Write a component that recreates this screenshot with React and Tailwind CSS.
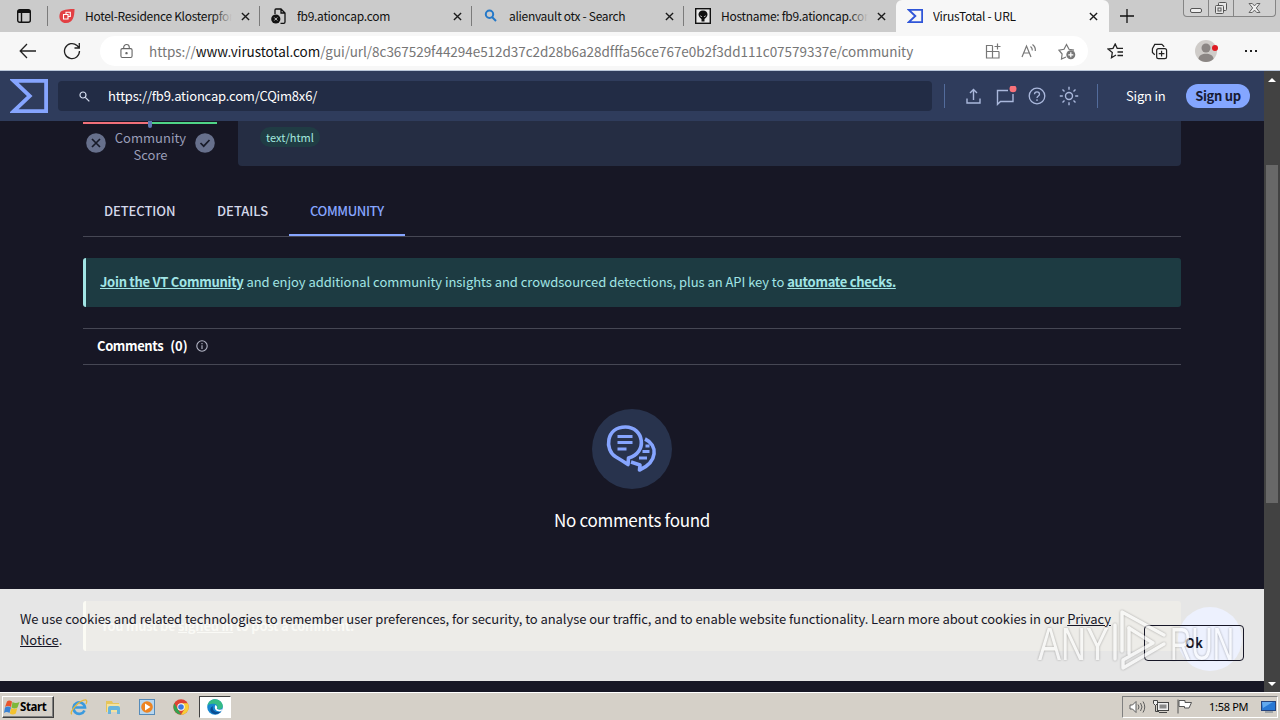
import React from 'react';

const Sigma = ({ className, strokeWidth = 9 }) => (
  <svg viewBox="0 0 100 89" preserveAspectRatio="none" className={className} fill="none" stroke="currentColor" strokeWidth={strokeWidth}>
    <path d="M10 5H95V84H10L52 44.500Z" />
  </svg>
);

const CloseIcon = () => (
  <svg viewBox="0 0 10 10" className="h-[9px] w-[9px] shrink-0" stroke="#1b1b1b" strokeWidth="1.500">
    <path d="M1 1l8 8M9 1l-8 8" />
  </svg>
);

const FireIcon = () => (
  <svg viewBox="0 0 16 16" className="h-4 w-4 shrink-0">
    <path d="M2 3.500C5 1.500 11 1 15.500 1c0 7-1.500 14-8.500 14C0 15-1 7.500 2 3.500z" fill="#e23f43" />
    <path d="M4.500 6.500h4.500v4.500H4.500zM7 6V4.300h4.300v4.200H9.500" fill="none" stroke="#fff" strokeWidth="1.100" />
  </svg>
);

const BrokenFileIcon = () => (
  <svg viewBox="0 0 16 16" className="h-4 w-4 shrink-0" fill="none" stroke="#111" strokeWidth="1.300">
    <path d="M4 6V2q0-1 1-1h5l4 4v9q0 1.300-1.300 1.300H9.500M10 1v4h4" />
    <circle cx="4.800" cy="11" r="4.600" fill="#111" stroke="none" />
    <path d="M3.300 9.500l3 3m0-3l-3 3" stroke="#ccc" strokeWidth="1" />
  </svg>
);

const BlueSearchIcon = () => (
  <svg viewBox="0 0 16 16" className="h-4 w-4 shrink-0" fill="none" stroke="#2478c8" strokeWidth="2">
    <circle cx="6.500" cy="6.300" r="3.700" />
    <path d="M9 9l4 4" />
  </svg>
);

const AlienIcon = () => (
  <svg viewBox="0 0 16 16" className="h-4 w-4 shrink-0">
    <rect x="0.700" y="0.700" width="14.600" height="14.600" fill="#e8e8e8" stroke="#111" strokeWidth="1.400" />
    <path d="M8 2.500c3 0 4.500 1.800 4.500 4 0 2.500-2 3.500-3 4.500v2.500h-3V11C5.500 10 3.500 9 3.500 6.500c0-2.200 1.500-4 4.500-4z" fill="#111" />
    <path d="M5 7l2.300 2H6zM11 7L8.700 9H10z" fill="#eee" />
  </svg>
);

const tabs = [
  { title: 'Hotel-Residence Klosterpforte', icon: <FireIcon />, fade: true },
  { title: 'fb9.ationcap.com', icon: <BrokenFileIcon /> },
  { title: 'alienvault otx - Search', icon: <BlueSearchIcon /> },
  { title: 'Hostname: fb9.ationcap.com', icon: <AlienIcon />, fade: true },
  { title: 'VirusTotal - URL', icon: <Sigma className="h-[14px] w-4 shrink-0 text-[#2f55d8]" strokeWidth={12} />, active: true },
];

const Tab = ({ tab }) => (
  <div className={tab.active
    ? 'flex w-[213px] items-center rounded-t-md bg-[#f7f7f7] pl-[11px] pr-[11px]'
    : 'flex w-[212px] items-center pl-[11px] pr-[10px]'}
  >
    {tab.icon}
    <div className="relative ml-[10px] mr-[9px] flex-1 overflow-hidden whitespace-nowrap text-[12px] leading-4 tracking-[-0.300px] text-[#111]">
      {tab.title}
      {tab.fade && <span className="absolute inset-y-0 right-0 w-5 bg-linear-to-r from-transparent to-[#cbcbcb]" />}
    </div>
    <CloseIcon />
  </div>
);

const TabStrip = () => (
  <div className="flex h-8 shrink-0 bg-[#cbcbcb]">
    <div className="flex w-12 items-center justify-center">
      <svg viewBox="0 0 16 16" className="h-4 w-4" fill="none" stroke="#111" strokeWidth="1.400">
        <rect x="1.700" y="1.700" width="12.600" height="12.600" rx="2" />
        <path d="M2 3.500h12" strokeWidth="3" />
        <path d="M5.500 4v10" />
      </svg>
    </div>
    {tabs.map((tab, i) => (
      <React.Fragment key={tab.title}>
        {i < 4 && <div className="-ml-px mt-[6px] h-5 w-px bg-[#7b7b7b]" />}
        <Tab tab={tab} />
      </React.Fragment>
    ))}
    <svg viewBox="0 0 14 14" className="ml-[11px] mt-[9px] h-[14px] w-[14px]" stroke="#111" strokeWidth="1.300">
      <path d="M7 0v14M0 7h14" />
    </svg>
    <div className="ml-auto mr-[4px] flex h-[17px] w-[93px] rounded-b-[4px] border border-t-0 border-[#858585] bg-[#d0d0d0]">
      <div className="flex w-[25px] justify-center border-r border-[#858585] pt-[8px]">
        <span className="h-[5px] w-3 rounded-[2px] border border-[#555] bg-[#eee]" />
      </div>
      <div className="flex w-[25px] justify-center border-r border-[#858585] pt-[2px]">
        <svg viewBox="0 0 14 13" className="h-[13px] w-[14px]" fill="#e6e6e6" stroke="#555">
          <rect x="4.500" y="0.500" width="8" height="8" rx="1" />
          <rect x="1.500" y="3.500" width="8" height="8" rx="1" />
          <rect x="4" y="6" width="3" height="3" />
        </svg>
      </div>
      <div className="flex flex-1 justify-center pt-[3px]">
        <svg viewBox="0 0 14 11" className="h-[10px] w-[13px]">
          <path d="M1 .5h3.500L7 3.200 9.500.5H13L9 5.500l4 5H9.500L7 7.800l-2.500 2.700H1l4-5z" fill="#eee" stroke="#555" />
        </svg>
      </div>
    </div>
  </div>
);

const Toolbar = () => (
  <div className="flex h-[39px] shrink-0 items-center border-b border-[#b9c6da] bg-[#f7f7f7]">
    <svg viewBox="0 0 18 16" className="ml-[19px] h-4 w-[18px]" fill="none" stroke="#222" strokeWidth="1.300">
      <path d="M17 8H1.500M8 1L1.200 8 8 15" />
    </svg>
    <svg viewBox="0 0 18 18" className="ml-[26px] h-[18px] w-[18px]" fill="none" stroke="#222" strokeWidth="1.300">
      <path d="M16.500 9A7.500 7.500 0 1 1 14 3.500l2 2M16.300 1v5H11.500" />
    </svg>
    <div className="ml-[19px] flex h-[30px] w-[988px] items-center rounded-full bg-white pl-[20px]">
      <svg viewBox="0 0 14 16" className="h-4 w-[13px] shrink-0" fill="none" stroke="#666" strokeWidth="1.200">
        <rect x="1" y="5.500" width="12" height="9.500" rx="1.500" />
        <path d="M4 5.500V4a3 3 0 0 1 6 0v1.500" />
        <circle cx="7" cy="10.300" r="0.700" fill="#666" />
      </svg>
      <div className="ml-4 w-[800px] whitespace-nowrap text-[13.500px] tracking-[-0.040px] text-[#767676]">
        https://<span className="text-[#111]">www.virustotal.com</span>/gui/url/8c367529f44294e512d37c2d28b6a28dfffa56ce767e0b2f3dd111c07579337e/community
      </div>
      <div className="ml-auto mr-[12px] flex items-center gap-[20px] text-[#777]">
        <svg viewBox="0 0 16 16" className="h-4 w-4" fill="none" stroke="currentColor" strokeWidth="1.200">
          <path d="M7.500 2.500H1.500v12.500h12.500V8.500M1.500 8.500h12.500M7.500 2.500v12.500M12.500.5v6M9.500 3.500h6" />
        </svg>
        <svg viewBox="0 0 17 16" className="h-4 w-[17px]" fill="none" stroke="currentColor" strokeWidth="1.200">
          <path d="M1 14L5.500 3 10 14M2.700 10h5.800M9.500 3.500q2 1.500 1.800 4M11.500 1.500q3.300 2.500 2.800 6.500" />
        </svg>
        <svg viewBox="0 0 18 17" className="h-[17px] w-[18px]" fill="none" stroke="currentColor" strokeWidth="1.200">
          <path d="M8 14l-4.500 2 .6-5L1 7.200l5-.9L8.500 1.500 11 6.300l5 .9" />
          <circle cx="12.800" cy="11.800" r="4.500" fill="currentColor" stroke="none" />
          <path d="M12.800 9.300v5M10.300 11.800h5" stroke="#fff" />
        </svg>
      </div>
    </div>
    <svg viewBox="0 0 18 16" className="ml-[19px] h-4 w-[18px]" fill="none" stroke="#222" strokeWidth="1.300">
      <path d="M9 12l-4.500 2.700.8-5.200L1 6l5-.7L8.200 1l2 4.300H16M10.500 9H16M10.500 12.500H16" />
    </svg>
    <svg viewBox="0 0 18 18" className="ml-[26px] h-[17px] w-[17px]" fill="none" stroke="#222" strokeWidth="1.300">
      <path d="M4 12.500L1.500 10V6L4 1.500h7.500L14 4" />
      <rect x="6" y="6" width="10.500" height="10.500" rx="2" />
      <path d="M11.200 8.200v6M8.200 11.200h6" />
    </svg>
    <svg viewBox="0 0 24 22" className="ml-[27px] h-[22px] w-6">
      <circle cx="11" cy="11" r="11" fill="#cfccc9" />
      <circle cx="11" cy="8" r="4.500" fill="#8b8684" />
      <path d="M3.500 19c0-7 15-7 15 0-4 4-11 4-15 0z" fill="#8b8684" />
      <circle cx="20" cy="8" r="3" fill="#df1b23" />
    </svg>
    <div className="ml-[26px] flex gap-[3px]">
      <span className="h-[2px] w-[2px] bg-[#222]" />
      <span className="h-[2px] w-[2px] bg-[#222]" />
      <span className="h-[2px] w-[2px] bg-[#222]" />
    </div>
  </div>
);

const Header = () => (
  <header className="flex h-[50px] items-center bg-[#2f3c5c]">
    <Sigma className="ml-[10px] h-[34px] w-[38px] text-[#86a5ff]" strokeWidth={10} />
    <div className="ml-[10px] flex h-[30px] w-[874px] items-center rounded-[4px] bg-[#222c45] pl-[21px]">
      <svg viewBox="0 0 11 11" className="h-[11px] w-[11px]" fill="none" stroke="#d6def0" strokeWidth="1.200">
        <circle cx="4" cy="4" r="3" />
        <path d="M6.300 6.300l4 4" />
      </svg>
      <span className="ml-[18px] text-[13px] tracking-[-0.190px] text-white">https://fb9.ationcap.com/CQim8x6/</span>
    </div>
    <div className="ml-[12px] h-6 w-px bg-[#536c9c]" />
    <div className="ml-[20px] flex items-center gap-[13px] text-[#aab8dc]">
      <svg viewBox="0 0 17 16" className="h-4 w-[17px]" fill="none" stroke="currentColor" strokeWidth="1.400">
        <path d="M2 10.500V15h13v-4.500M8.500 12V2M5 5l3.500-3.500L12 5" />
      </svg>
      <svg viewBox="0 0 22 20" className="-mt-px h-5 w-[22px]" fill="none" stroke="currentColor" strokeWidth="1.400">
        <path d="M13 4.500H2.500v13.800L5.500 15.500h12.500V8" />
        <circle cx="18" cy="2.800" r="3.500" fill="#f8727a" stroke="none" />
      </svg>
      <svg viewBox="0 0 18 18" className="-ml-[2px] h-[18px] w-[18px]" fill="none" stroke="currentColor" strokeWidth="1.300">
        <circle cx="9" cy="9" r="7.800" />
        <path d="M6.500 7.200C6.500 4 11.500 4 11.500 7.200c0 1.800-2.500 1.700-2.500 3.800M9 12.300v1.700" />
      </svg>
      <svg viewBox="0 0 20 20" className="h-5 w-5" fill="none" stroke="currentColor" strokeWidth="1.400">
        <circle cx="10" cy="10" r="3.500" />
        <path d="M10 .8v3M10 16.200v3M.8 10h3M16.200 10h3M3.500 3.500l2 2M14.500 14.500l2 2M3.500 16.500l2-2M14.500 5.500l2-2" />
      </svg>
    </div>
    <div className="ml-[18px] h-6 w-px bg-[#536c9c]" />
    <span className="ml-[28px] w-[40px] whitespace-nowrap text-[13px] tracking-[-0.200px] text-white">Sign in</span>
    <span className="ml-[20px] flex h-6 w-16 items-center justify-center rounded-full bg-[#84a6ff] text-[13px] font-bold tracking-[-0.300px] text-[#171a33]">Sign up</span>
  </header>
);

const Summary = () => (
  <div className="flex h-[45px]">
    <div className="w-[134px]">
      <div className="flex h-[7px] items-start">
        <span className="mt-px h-[2px] w-[65px] bg-[#f0707a]" />
        <span className="h-[7px] w-[4px] rounded-b-sm bg-[#5c78b4]" />
        <span className="mt-px h-[2px] w-[65px] bg-[#4fd487]" />
      </div>
      <div className="flex justify-between pl-[3px] pr-[2px] text-[#67708c]">
        <svg viewBox="0 0 20 20" className="mt-[5px] h-5 w-5">
          <circle cx="10" cy="10" r="9.800" fill="currentColor" />
          <path d="M6 6l8 8M14 6l-8 8" stroke="#171a28" strokeWidth="1.700" />
        </svg>
        <div className="mt-px text-center text-[13px] leading-[17px] text-[#9a9eb8]">Community<br />Score</div>
        <svg viewBox="0 0 20 20" className="mt-[5px] h-5 w-5">
          <circle cx="10" cy="10" r="9.800" fill="currentColor" />
          <path d="M5.500 10l3.200 3.200L14.500 7" fill="none" stroke="#171a28" strokeWidth="1.700" />
        </svg>
      </div>
    </div>
    <div className="ml-[21px] flex-1 rounded-b-[4px] bg-[#252d43] pl-[22px] pt-[6px]">
      <span className="flex h-5 w-[60px] items-center justify-center rounded-full bg-[#203c44] text-[11px] text-[#a2e8df]">text/html</span>
    </div>
  </div>
);

const EmptyComments = () => (
  <div className="flex flex-col items-center pt-[44px]">
    <svg viewBox="0 0 80 80" className="h-20 w-20" fill="none" stroke="#86a5ff" strokeWidth="3.600" strokeLinejoin="round">
      <circle cx="40" cy="40" r="40" fill="#28334d" stroke="none" />
      <path d="M36.500 49C56 44 52 18 33.500 18C14 18 12 41 24 48Q30 51.500 36 55.500Z" />
      <path d="M53 30C66 36 66 53 47.500 61L48 56L39 53" />
      <path d="M25.500 27.500h15M25.500 33.500h15M25.500 40h9M53.500 37h4M50.500 42.500h7M47 49h8" strokeWidth="3" />
    </svg>
    <p className="mt-[19px] text-[17px] leading-6 tracking-[-0.300px] text-white">No comments found</p>
  </div>
);

const CookieBar = () => (
  <div className="absolute inset-x-0 bottom-[11px] h-[92px] bg-[#e6e6e6]">
    <div className="absolute left-[83px] top-[12px] flex h-[50px] w-[1098px] items-center rounded-[3px] border-l-[3px] border-[#fbfbf4] bg-[#edece8] pl-[15px] text-[13px] font-bold tracking-[-0.280px] text-[#fafaf6]">
      <span>You must be <u>signed in</u> to post a comment.</span>
    </div>
    <div className="absolute left-[1178px] top-[18px] h-16 w-16 rounded-full bg-[#edf1fe]" />
    <div className="relative flex h-full">
      <p className="ml-5 mt-[19px] w-[1110px] whitespace-nowrap text-[13px] leading-[21px] tracking-[-0.063px] text-[#171727]">
        We use cookies and related technologies to remember user preferences, for security, to analyse our traffic, and to enable website functionality. Learn more about cookies in our <u>Privacy<br />Notice</u>.
      </p>
      <button className="ml-[14px] mt-[36px] h-9 w-[100px] rounded-[4px] border border-[#171727] text-[13px] font-bold text-[#171727]">Ok</button>
    </div>
  </div>
);

const Watermark = () => (
  <svg viewBox="0 0 206 70" className="absolute left-[1033px] top-[534px] h-[70px] w-[206px] opacity-60 drop-shadow-[0_0_1px_rgba(0,0,0,0.5)]" fontFamily="Liberation Sans, sans-serif" fontSize="47">
    <text x="5" y="55" textLength="71" lengthAdjust="spacingAndGlyphs" fill="#fff">ANY</text>
    <text x="137" y="55" textLength="64" lengthAdjust="spacingAndGlyphs" fill="#fff">RUN</text>
    <g fill="none" stroke="#fff" strokeWidth="3.500" strokeLinejoin="round" strokeLinecap="round">
      <path d="M82 20v34M89 46V7L131 30M96 23L120 38 90 55V63L131 39" />
      <path d="M96 23v26" />
    </g>
  </svg>
);

const Page = () => (
  <div className="relative h-[621px] w-[1264px] overflow-hidden bg-[#171725]">
    <Header />
    <main className="ml-[83px] w-[1098px]">
      <Summary />
      <nav className="mt-[21px] flex h-[50px] border-b border-[#464754] text-[13px] font-medium text-[#d4d8ea]">
        <span className="w-[113px] pl-[21px] pt-[14px] tracking-[-0.080px]">DETECTION</span>
        <span className="w-[93px] pl-[21px] pt-[14px]">DETAILS</span>
        <span className="h-[49px] w-[116px] border-b-2 border-[#86a5ff] pl-[21px] pt-[14px] tracking-[-0.400px] text-[#86a5ff]">COMMUNITY</span>
      </nav>
      <div className="mt-[21px] flex h-[49px] items-center rounded-[3px] border-l-[3px] border-[#a1e5e5] bg-[#1d3b42] pl-[14px] text-[13px] text-[#a1e5e5]">
        <p className="whitespace-nowrap pb-[2px] tracking-[-0.045px]">
          <b className="tracking-[-0.280px] underline">Join the VT Community</b> and enjoy additional community insights and crowdsourced detections, plus an API key to <b className="tracking-[-0.280px] underline">automate checks.</b>
        </p>
      </div>
      <div className="mt-[21px] flex h-[37px] items-center border-y border-[#464754] pb-px pl-[14px] text-[13px] font-bold tracking-[-0.400px] text-white">
        Comments <span className="ml-[7px] tracking-normal">(0)</span>
        <svg viewBox="0 0 12 12" className="ml-[8px] h-3 w-3" fill="none" stroke="#b4b6c6" strokeWidth="1.100">
          <circle cx="6" cy="6" r="5.200" />
          <path d="M6 5.300V9M6 3v1.200" />
        </svg>
      </div>
      <EmptyComments />
    </main>
    <CookieBar />
    <Watermark />
  </div>
);

const ScrollBar = () => (
  <div className="flex w-4 flex-col items-center bg-[#424242]">
    <div className="mt-[7px] h-0 w-0 border-x-4 border-b-4 border-x-transparent border-b-white" />
    <div className="mt-[83px] h-[338px] w-[12px] bg-[#686868]" />
    <div className="mb-[6px] mt-auto h-0 w-0 border-x-4 border-t-4 border-x-transparent border-t-white" />
  </div>
);

const Taskbar = () => (
  <div className="flex h-7 items-center border-t border-white bg-[#d5d0c8]">
    <div className="ml-[2px] flex h-[22px] w-[52px] items-center border border-b-[#404040] border-l-white border-r-[#404040] border-t-white shadow-[inset_-1px_-1px_#808080]">
      <svg viewBox="0 0 16 16" className="ml-px h-4 w-4 shrink-0">
        <path d="M3 2.500q2-2 5 0L7 8Q4 6 1 8z" fill="#e8552d" />
        <path d="M8.500 3q3 2 7 0l-2 5.500q-3 2-6 0z" fill="#7db83a" />
        <path d="M1 8.500q3-2 6 0l-1.500 5.500q-3-2-5.500 0z" fill="#3a82d4" />
        <path d="M7.300 9q3 2 6 0l-1.500 5.500q-3 2-6 0z" fill="#f4c22f" />
      </svg>
      <b className="font-['Noto_Sans',sans-serif] text-[11.500px] leading-4 tracking-[-0.400px] text-black">Start</b>
    </div>
    <svg viewBox="0 0 18 18" className="ml-[16px] h-[18px] w-[18px]" fill="none">
      <path d="M14.500 12.500A5.800 5.800 0 1 1 15 9.500H4" stroke="#3b9ade" strokeWidth="2.600" />
      <path d="M2 16c-4-1 8-15 14-14q1.500 1 0 4" stroke="#e5b73c" strokeWidth="1.300" />
    </svg>
    <svg viewBox="0 0 18 18" className="ml-[16px] h-[18px] w-[18px]">
      <path d="M2 3h6l1 2h6v9H2z" fill="#e6c55c" />
      <path d="M3 6h13v8H3z" fill="#f4e2a0" />
      <path d="M4 10q0-2 2-2h8q2 0 2 2v6h-3v-4H7v4H4z" fill="#68b4dc" />
    </svg>
    <svg viewBox="0 0 16 16" className="ml-[17px] h-4 w-4">
      <rect x="0.500" y="0.500" width="15" height="15" fill="#b7d6ef" stroke="#568bb9" />
      <circle cx="8" cy="8" r="5.800" fill="#ed8422" />
      <path d="M6 4.500L11.500 8 6 11.500z" fill="#fff" />
    </svg>
    <svg viewBox="0 0 16 16" className="ml-[18px] h-4 w-4">
      <circle cx="8" cy="8" r="7.700" fill="#dd4334" />
      <path d="M1.300 4.300L5 10.500l3 5A7.700 7.700 0 0 1 1.300 4.300z" fill="#31a350" />
      <path d="M8 4.300h6.800A7.700 7.700 0 0 1 8 15.700l3.300-5.500z" fill="#f7cf38" />
      <circle cx="8" cy="8" r="3.700" fill="#fff" />
      <circle cx="8" cy="8" r="2.800" fill="#3c79df" />
    </svg>
    <div className="ml-[10px] flex h-[22px] w-[32px] items-center justify-center border border-b-white border-l-[#404040] border-r-white border-t-[#404040] bg-white">
      <svg viewBox="0 0 16 16" className="h-4 w-4">
        <circle cx="8" cy="8" r="7.800" fill="#1686d1" />
        <path d="M.5 7C1 2.500 4.500.2 8 .2c5 0 8 4 7.800 7-.2 2.600-3.500 3.700-5.800 2.300 1-2 .5-4-2-4.500C4.500 4.300 1.500 5 .5 7z" fill="#35bb86" />
        <path d="M6 7c-1.500 4 2 7.500 8 5.500C9 18 1 14 4 8.500z" fill="#0b4d93" />
        <path d="M8.300 6c2 .6 2.200 2.500 1.500 3.800 1.500 1.200 4 1.200 6 .2l-1.500 2.300C10 13 6.500 10.500 8.300 6z" fill="#fff" />
      </svg>
    </div>
    <div className="ml-auto mr-[2px] flex h-[22px] w-[156px] items-center border border-b-white border-l-[#808080] border-r-white border-t-[#808080]">
      <svg viewBox="0 0 17 14" className="ml-[6px] h-[14px] w-[17px]" fill="#fff" stroke="#5d5d5d">
        <path d="M1 5h2.500L7 1.500v11L3.500 9H1z" />
        <path d="M9 4.500q2 2.500 0 5M11.500 3q3 4 0 8M14 1.500q3.500 5.500 0 11" fill="none" />
      </svg>
      <svg viewBox="0 0 16 15" className="ml-[7px] h-[15px] w-4" fill="#eee" stroke="#444">
        <rect x="4.500" y="3.500" width="11" height="8" />
        <rect x="6.500" y="5.500" width="7" height="4" fill="#888" stroke="none" />
        <path d="M6 13.500h8M2.500 6v6.500H6" fill="none" />
        <path d="M.5 1.500h4v3l-2 2-2-2z" />
      </svg>
      <svg viewBox="0 0 16 15" className="ml-[8px] h-[15px] w-4" fill="#fff" stroke="#555">
        <path d="M1 .5v14M2 1.500h6v2h6.500L12 9H7.500V7.500H2z" />
      </svg>
      <span className="ml-[16px] whitespace-nowrap font-['Noto_Sans',sans-serif] text-[11px] leading-4 tracking-[-0.300px] text-black">1:58 PM</span>
      <svg viewBox="0 0 15 13" className="ml-auto mr-[1px] h-[13px] w-[15px]">
        <rect x="0.500" y="1.500" width="14" height="9" fill="#2878d4" stroke="#25437d" />
        <path d="M1 2h11L2 8z" fill="#62a9ee" />
        <path d="M4 12h8" stroke="#687684" />
      </svg>
    </div>
  </div>
);

export default function App() {
  return (
    <div className="flex h-[720px] w-[1280px] flex-col overflow-hidden font-['Noto_Sans_CJK_SC',sans-serif]">
      <TabStrip />
      <Toolbar />
      <div className="flex h-[621px] shrink-0">
        <Page />
        <ScrollBar />
      </div>
      <Taskbar />
    </div>
  );
}
